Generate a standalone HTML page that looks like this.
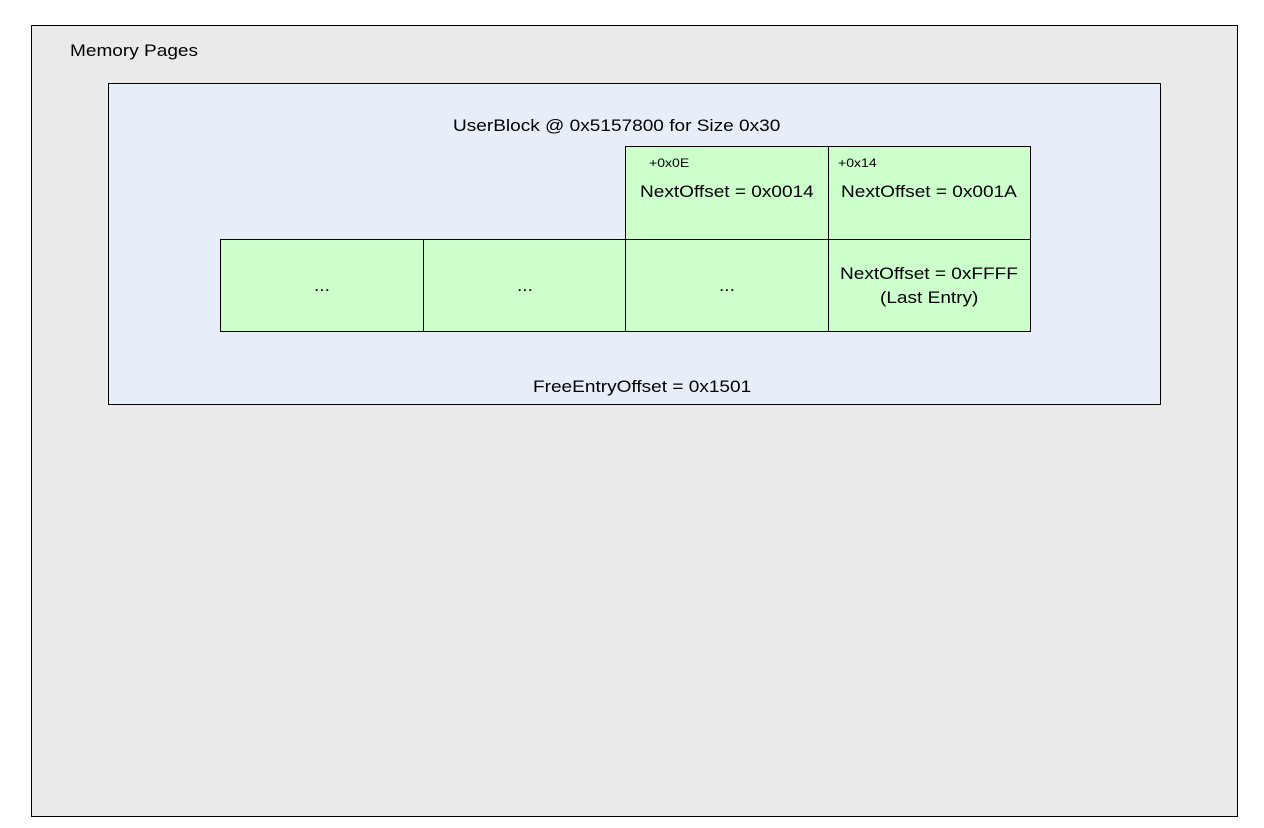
<!DOCTYPE html><html><head><style>
body{margin:0;width:1264px;height:828px;background:#fff;font-family:"Liberation Sans",sans-serif;color:#000;position:relative;overflow:hidden}
div{position:absolute;box-sizing:border-box}
.b{border:1px solid #000}
.c{background:#ccffcc;border:1px solid #000}
.t{position:absolute;font-size:17px;white-space:nowrap;transform:scaleX(1.12);transform-origin:0 0}
.s{position:absolute;font-size:12px;transform:scaleX(1.17);transform-origin:0 0}
</style></head><body>
<div class="b" style="left:31px;top:25px;width:1207px;height:792px;background:#eaeaea"></div>
<span class="t" style="left:70px;top:41px">Memory Pages</span>
<div class="b" style="left:108px;top:83px;width:1053px;height:322px;background:#e8eef8"></div>
<span class="t" style="left:453px;top:116px">UserBlock @ 0x5157800 for Size 0x30</span>
<div class="c" style="left:625px;top:146px;width:204px;height:94px"></div>
<div class="c" style="left:828px;top:146px;width:203px;height:94px"></div>
<div class="c" style="left:220px;top:239px;width:204px;height:93px"></div>
<div class="c" style="left:423px;top:239px;width:203px;height:93px"></div>
<div class="c" style="left:625px;top:239px;width:204px;height:93px"></div>
<div class="c" style="left:828px;top:239px;width:203px;height:93px"></div>
<span class="s" style="left:649px;top:156px">+0x0E</span>
<span class="s" style="left:838px;top:156px">+0x14</span>
<span class="t" style="left:640px;top:182px">NextOffset = 0x0014</span>
<span class="t" style="left:841px;top:182px">NextOffset = 0x001A</span>
<span class="t" style="left:314px;top:276px">...</span>
<span class="t" style="left:517px;top:276px">...</span>
<span class="t" style="left:719px;top:276px">...</span>
<span class="t" style="left:840px;top:264px">NextOffset = 0xFFFF</span>
<span class="t" style="left:880px;top:288px">(Last Entry)</span>
<span class="t" style="left:533px;top:377px">FreeEntryOffset = 0x1501</span>
</body></html>
